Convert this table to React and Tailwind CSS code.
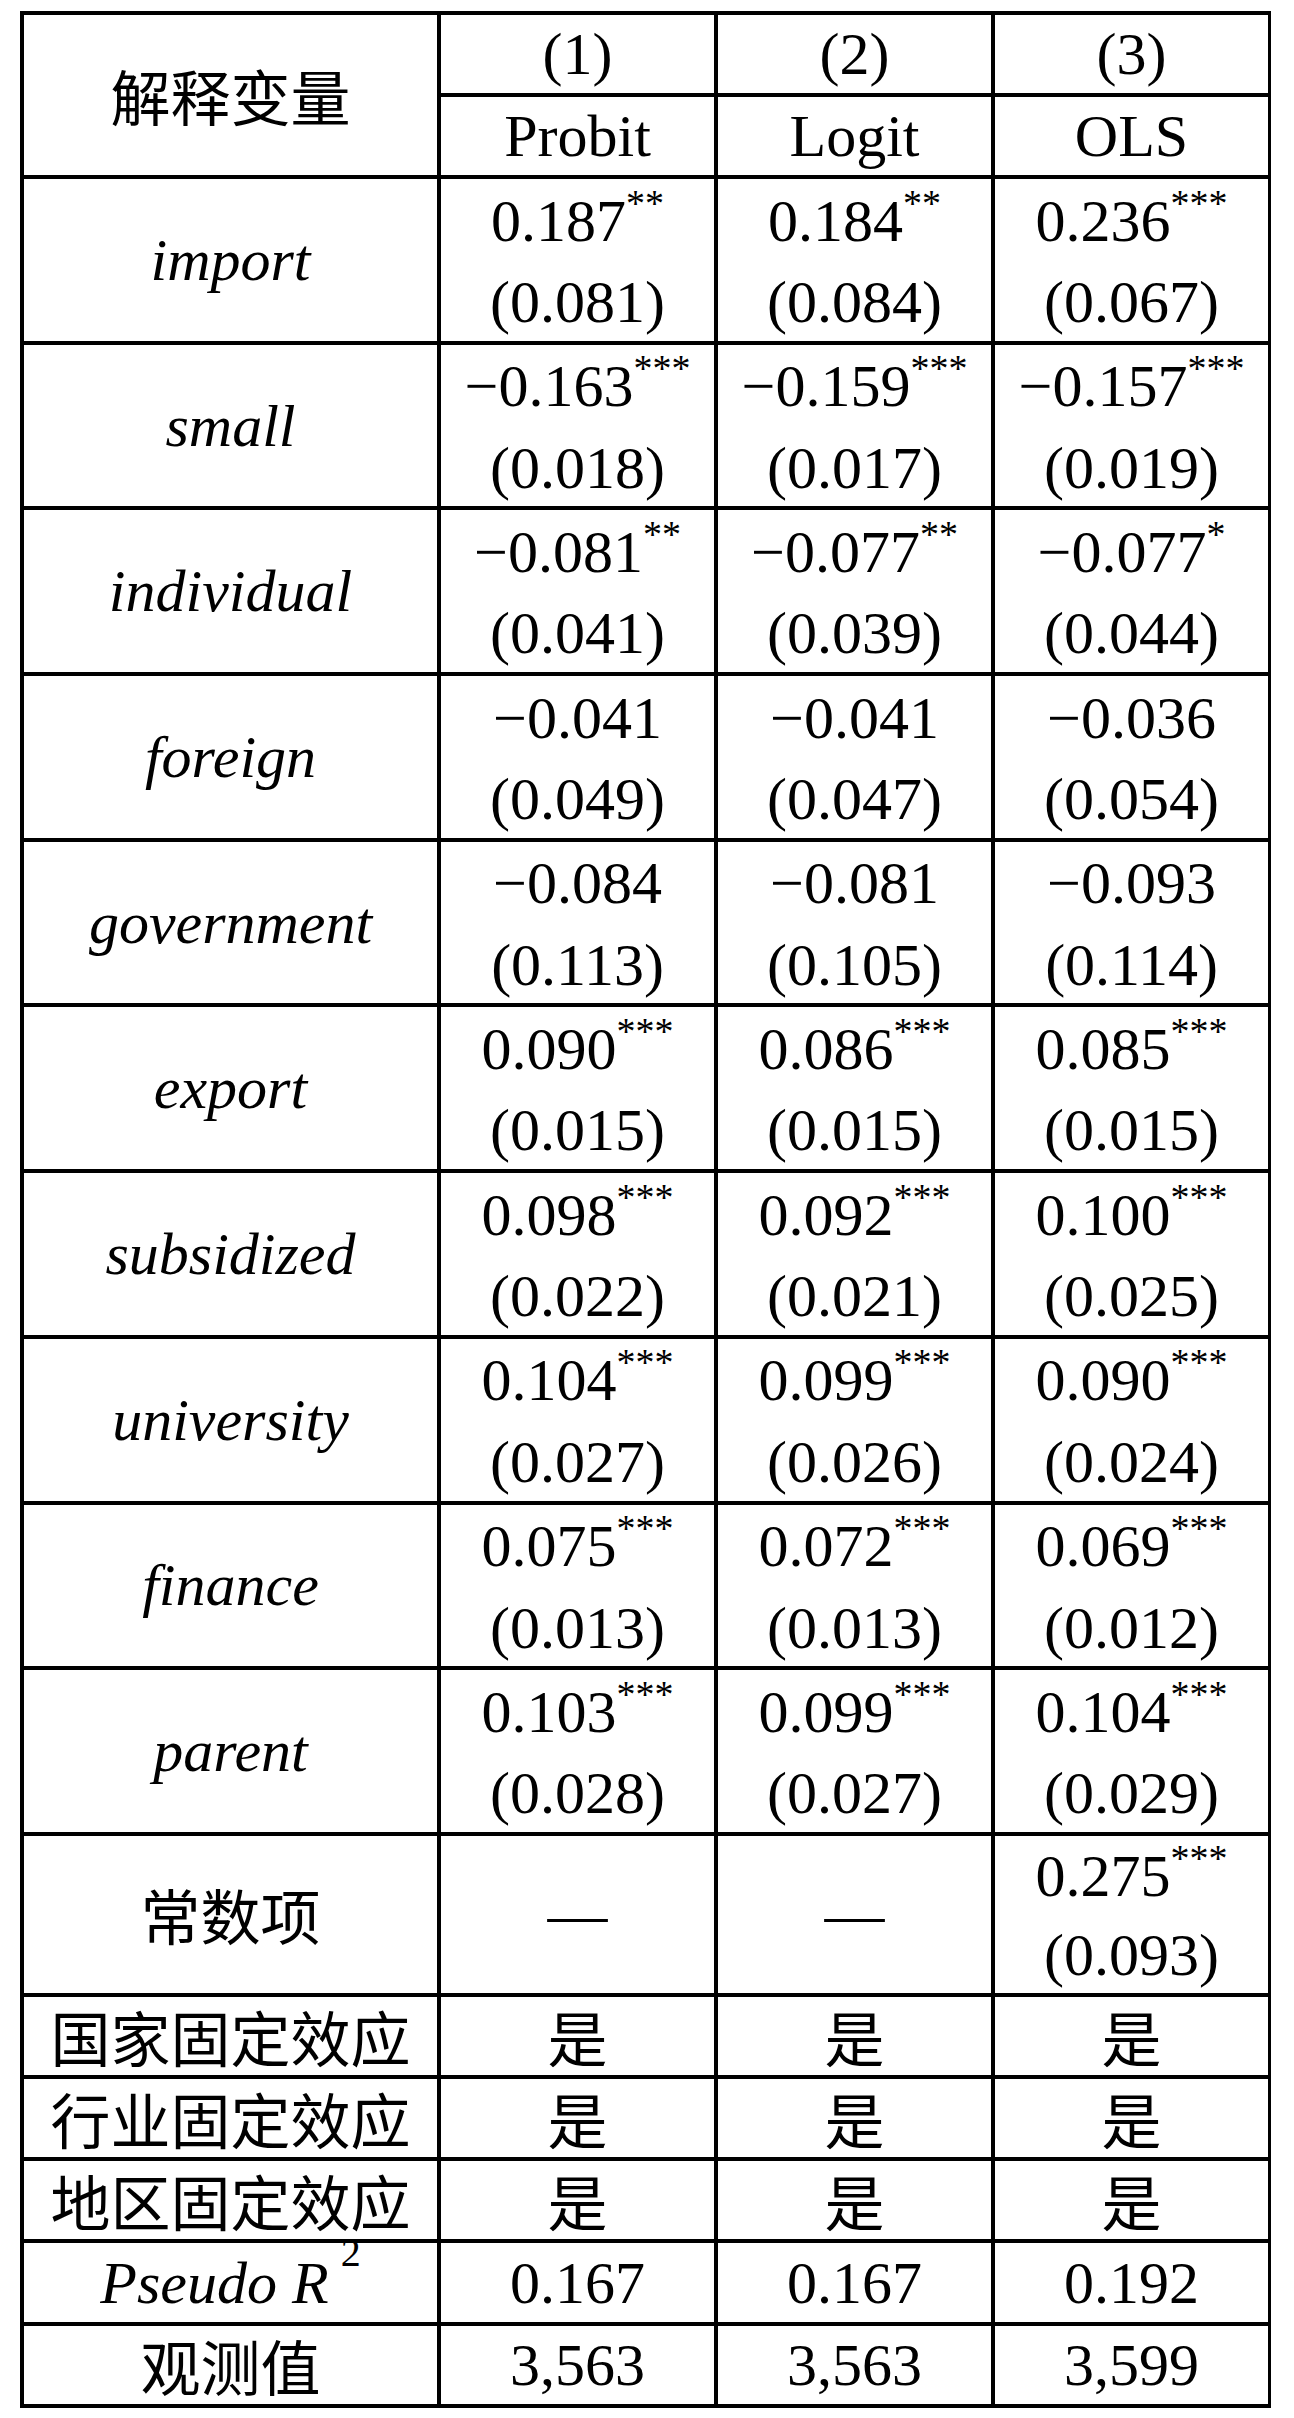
import React from 'react';

const models = [
  { no: '(1)', name: 'Probit' },
  { no: '(2)', name: 'Logit' },
  { no: '(3)', name: 'OLS' },
];

// 每行: 变量名, 然后每个模型 [系数, 显著性星号, 标准误]
const rows = [
  ['import', [['0.187', '**', '(0.081)'], ['0.184', '**', '(0.084)'], ['0.236', '***', '(0.067)']]],
  ['small', [['−0.163', '***', '(0.018)'], ['−0.159', '***', '(0.017)'], ['−0.157', '***', '(0.019)']]],
  ['individual', [['−0.081', '**', '(0.041)'], ['−0.077', '**', '(0.039)'], ['−0.077', '*', '(0.044)']]],
  ['foreign', [['−0.041', '', '(0.049)'], ['−0.041', '', '(0.047)'], ['−0.036', '', '(0.054)']]],
  ['government', [['−0.084', '', '(0.113)'], ['−0.081', '', '(0.105)'], ['−0.093', '', '(0.114)']]],
  ['export', [['0.090', '***', '(0.015)'], ['0.086', '***', '(0.015)'], ['0.085', '***', '(0.015)']]],
  ['subsidized', [['0.098', '***', '(0.022)'], ['0.092', '***', '(0.021)'], ['0.100', '***', '(0.025)']]],
  ['university', [['0.104', '***', '(0.027)'], ['0.099', '***', '(0.026)'], ['0.090', '***', '(0.024)']]],
  ['finance', [['0.075', '***', '(0.013)'], ['0.072', '***', '(0.013)'], ['0.069', '***', '(0.012)']]],
  ['parent', [['0.103', '***', '(0.028)'], ['0.099', '***', '(0.027)'], ['0.104', '***', '(0.029)']]],
];

const effects = ['国家固定效应', '行业固定效应', '地区固定效应'];

const cjk = "font-['Noto_Sans_CJK_SC',sans-serif]";

function Cell({ children, className = '' }) {
  return <div className={`bg-white flex items-center justify-center ${className}`}>{children}</div>;
}

function Coef({ value, stars }) {
  return (
    <span>
      {value}
      {stars && <sup className="text-[38px] top-[-25px]">{stars}</sup>}
    </span>
  );
}

function Stacked({ top, bottom }) {
  return (
    <div className="bg-white flex flex-col gap-[4px] pt-[3px]">
      <div className="flex-1 flex items-center justify-center">{top}</div>
      <div className="flex-1 flex items-center justify-center">{bottom}</div>
    </div>
  );
}

export default function App() {
  return (
    <div className="min-h-[2418px] bg-white pt-[11px] pl-[20px] text-black text-[60px] leading-[64px] font-['Liberation_Serif','Noto_Sans_CJK_SC',serif]">
      <div className="grid w-[1251px] grid-cols-[413px_273px_273px_273px] grid-rows-[78px_78px_repeat(10,161.7px)_157px_repeat(5,78.2px)] gap-[4px] bg-black p-[4px]">
        {/* 表头 */}
        <Cell className={`row-span-2 ${cjk}`}>解释变量</Cell>
        {models.map((m) => (
          <Cell key={m.no}>{m.no}</Cell>
        ))}
        {models.map((m) => (
          <Cell key={m.name}>{m.name}</Cell>
        ))}

        {/* 回归系数 */}
        {rows.map(([name, cols]) => (
          <React.Fragment key={name}>
            <Cell className="italic">{name}</Cell>
            {cols.map(([v, s, se], i) => (
              <Stacked key={i} top={<Coef value={v} stars={s} />} bottom={se} />
            ))}
          </React.Fragment>
        ))}

        <Cell className={cjk}>常数项</Cell>
        <Cell>—</Cell>
        <Cell>—</Cell>
        <Stacked top={<Coef value="0.275" stars="***" />} bottom="(0.093)" />

        {effects.map((label) => (
          <React.Fragment key={label}>
            <Cell className={cjk}>{label}</Cell>
            <Cell className={cjk}>是</Cell>
            <Cell className={cjk}>是</Cell>
            <Cell className={cjk}>是</Cell>
          </React.Fragment>
        ))}

        <Cell>
          <span className="italic pr-[4px]">Pseudo R</span>
          <sup className="text-[40px] top-[-30px] ml-[8px]">2</sup>
        </Cell>
        <Cell>0.167</Cell>
        <Cell>0.167</Cell>
        <Cell>0.192</Cell>

        <Cell className={cjk}>观测值</Cell>
        <Cell>3,563</Cell>
        <Cell>3,563</Cell>
        <Cell>3,599</Cell>
      </div>
    </div>
  );
}
